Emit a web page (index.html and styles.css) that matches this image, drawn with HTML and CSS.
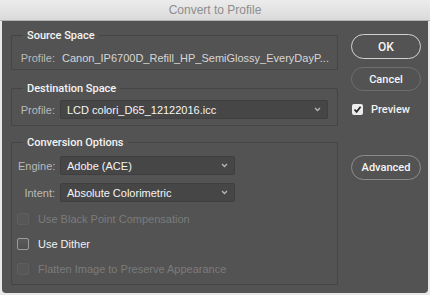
FILE: index.html
```html
<!DOCTYPE html>
<html lang="en">
<head>
  <meta charset="UTF-8">
  <title>Convert to Profile</title>
  <link rel="stylesheet" href="styles.css">
</head>
<body>
  <div class="window">
    <div class="titlebar">Convert to Profile</div>
    <div class="dialog">
      <div class="panels">
        <fieldset class="panel panel-source">
          <legend>Source Space</legend>
          <div class="field">
            <span class="label">Profile:</span>
            <span class="value">Canon_IP6700D_Refill_HP_SemiGlossy_EveryDayP...</span>
          </div>
        </fieldset>

        <fieldset class="panel panel-dest">
          <legend>Destination Space</legend>
          <div class="field">
            <span class="label">Profile:</span>
            <div class="select select-wide">
              <span>LCD colori_D65_12122016.icc</span>
              <svg class="chevron" width="7" height="5" viewBox="0 0 7 5"><path d="M1 1 L3.5 3.5 L6 1" fill="none" stroke="#b8b8b8" stroke-width="1.3"/></svg>
            </div>
          </div>
        </fieldset>

        <fieldset class="panel panel-conv">
          <legend>Conversion Options</legend>
          <div class="field">
            <span class="label">Engine:</span>
            <div class="select">
              <span>Adobe (ACE)</span>
              <svg class="chevron" width="7" height="5" viewBox="0 0 7 5"><path d="M1 1 L3.5 3.5 L6 1" fill="none" stroke="#b8b8b8" stroke-width="1.3"/></svg>
            </div>
          </div>
          <div class="field">
            <span class="label">Intent:</span>
            <div class="select">
              <span>Absolute Colorimetric</span>
              <svg class="chevron" width="7" height="5" viewBox="0 0 7 5"><path d="M1 1 L3.5 3.5 L6 1" fill="none" stroke="#b8b8b8" stroke-width="1.3"/></svg>
            </div>
          </div>
          <div class="checks">
            <div class="check disabled"><span class="box"></span>Use Black Point Compensation</div>
            <div class="check"><span class="box"></span>Use Dither</div>
            <div class="check disabled"><span class="box"></span>Flatten Image to Preserve Appearance</div>
          </div>
        </fieldset>
      </div>

      <div class="actions">
        <button class="btn btn-default">OK</button>
        <button class="btn btn-cancel">Cancel</button>
        <div class="preview">
          <span class="box checked">
            <svg width="9" height="9" viewBox="0 0 9 9"><path d="M1.5 4.5 L3.6 6.8 L7.6 1.8" fill="none" stroke="#2a2a2a" stroke-width="1.8"/></svg>
          </span>
          Preview
        </div>
        <button class="btn btn-advanced">Advanced</button>
      </div>
    </div>
  </div>
</body>
</html>
```

FILE: styles.css
```css
* {
  box-sizing: border-box;
}

body {
  margin: 0;
  background: #e9e9e9;
  font-family: "Liberation Sans", Arial, sans-serif;
  font-size: 11px;
}

.window {
  width: 430px;
  height: 295px;
}

.titlebar {
  height: 21px;
  line-height: 20px;
  text-align: center;
  font-size: 12px;
  color: #8d8d8d;
  background: linear-gradient(#ececec, #dadada);
  border-bottom: 1px solid #b2b2b2;
}

.dialog {
  display: flex;
  gap: 13px;
  margin: 0 2px;
  padding: 8px 7px 8px 9px;
  background: #535353;
  border-radius: 0 0 4px 4px;
}

/* Panels */
.panels {
  width: 327px;
  display: flex;
  flex-direction: column;
}

.panel {
  margin: 0;
  padding: 0 6px;
  border: 1px solid #454545;
  border-radius: 2px;
}

.panel legend {
  margin-left: 5px;
  padding: 0 4px;
  font-family: Roboto, "Liberation Sans", sans-serif;
  font-weight: 500;
  font-size: 11px;
  line-height: 13px;
  color: #f4f4f4;
}

.panel-source {
  padding-top: 9px;
  padding-bottom: 4px;
}

.panel-dest {
  margin-top: 12px;
  padding-top: 5px;
  padding-bottom: 6px;
}

.panel-conv {
  margin-top: 10px;
  padding-top: 7px;
  padding-bottom: 3px;
}

.field {
  display: flex;
  align-items: center;
  min-height: 14px;
}

.panel-conv .field + .field {
  margin-top: 8px;
}

.label {
  width: 37px;
  text-align: right;
  color: #bababa;
}

.value {
  margin-left: 7px;
  color: #d6d6d6;
  white-space: nowrap;
}

.select {
  display: flex;
  align-items: center;
  justify-content: space-between;
  width: 175px;
  height: 19px;
  margin-left: 5px;
  padding: 0 6px 0 6px;
  background: #464646;
  border: 1px solid #3f3f3f;
  border-radius: 2px;
  color: #f5f5f5;
  white-space: nowrap;
}

.select-wide {
  width: 268px;
}

/* Checkboxes */
.checks {
  margin-top: 4px;
}

.check {
  display: flex;
  align-items: center;
  height: 25px;
  color: #f2f2f2;
}

.box {
  width: 12px;
  height: 12px;
  margin-left: -1px;
  margin-right: 9px;
  border: 1px solid #9c9c9c;
  border-radius: 2px;
  background: linear-gradient(#5a5a5a, #505050);
}

.check.disabled {
  color: #7b7b7b;
}

.check.disabled .box {
  border-color: #5e5e5e;
  background: #575757;
}

/* Buttons column */
.actions {
  width: 70px;
  display: flex;
  flex-direction: column;
}

.btn {
  height: 25px;
  padding: 0;
  border: 1px solid #8a8a8a;
  border-radius: 13px;
  background: transparent;
  color: #f5f5f5;
  font-family: Roboto, "Liberation Sans", sans-serif;
  font-weight: 500;
  font-size: 11px;
}

.btn-default {
  margin-top: 5px;
  border: 1.5px solid #d2d2d2;
  font-size: 12px;
}

.btn-cancel {
  height: 24px;
  margin-top: 8px;
  border-color: #6e6e6e;
}

.btn-advanced {
  margin-top: 39px;
  border-color: #8c8c8c;
}

.preview {
  display: flex;
  align-items: center;
  height: 14px;
  margin-top: 11px;
  font-family: Roboto, "Liberation Sans", sans-serif;
  font-weight: 500;
  color: #f2f2f2;
}

.preview .box {
  display: flex;
  align-items: center;
  justify-content: center;
  width: 11px;
  height: 11px;
  margin-left: 1px;
  margin-right: 8px;
  border: none;
  background: #ececec;
}
```
